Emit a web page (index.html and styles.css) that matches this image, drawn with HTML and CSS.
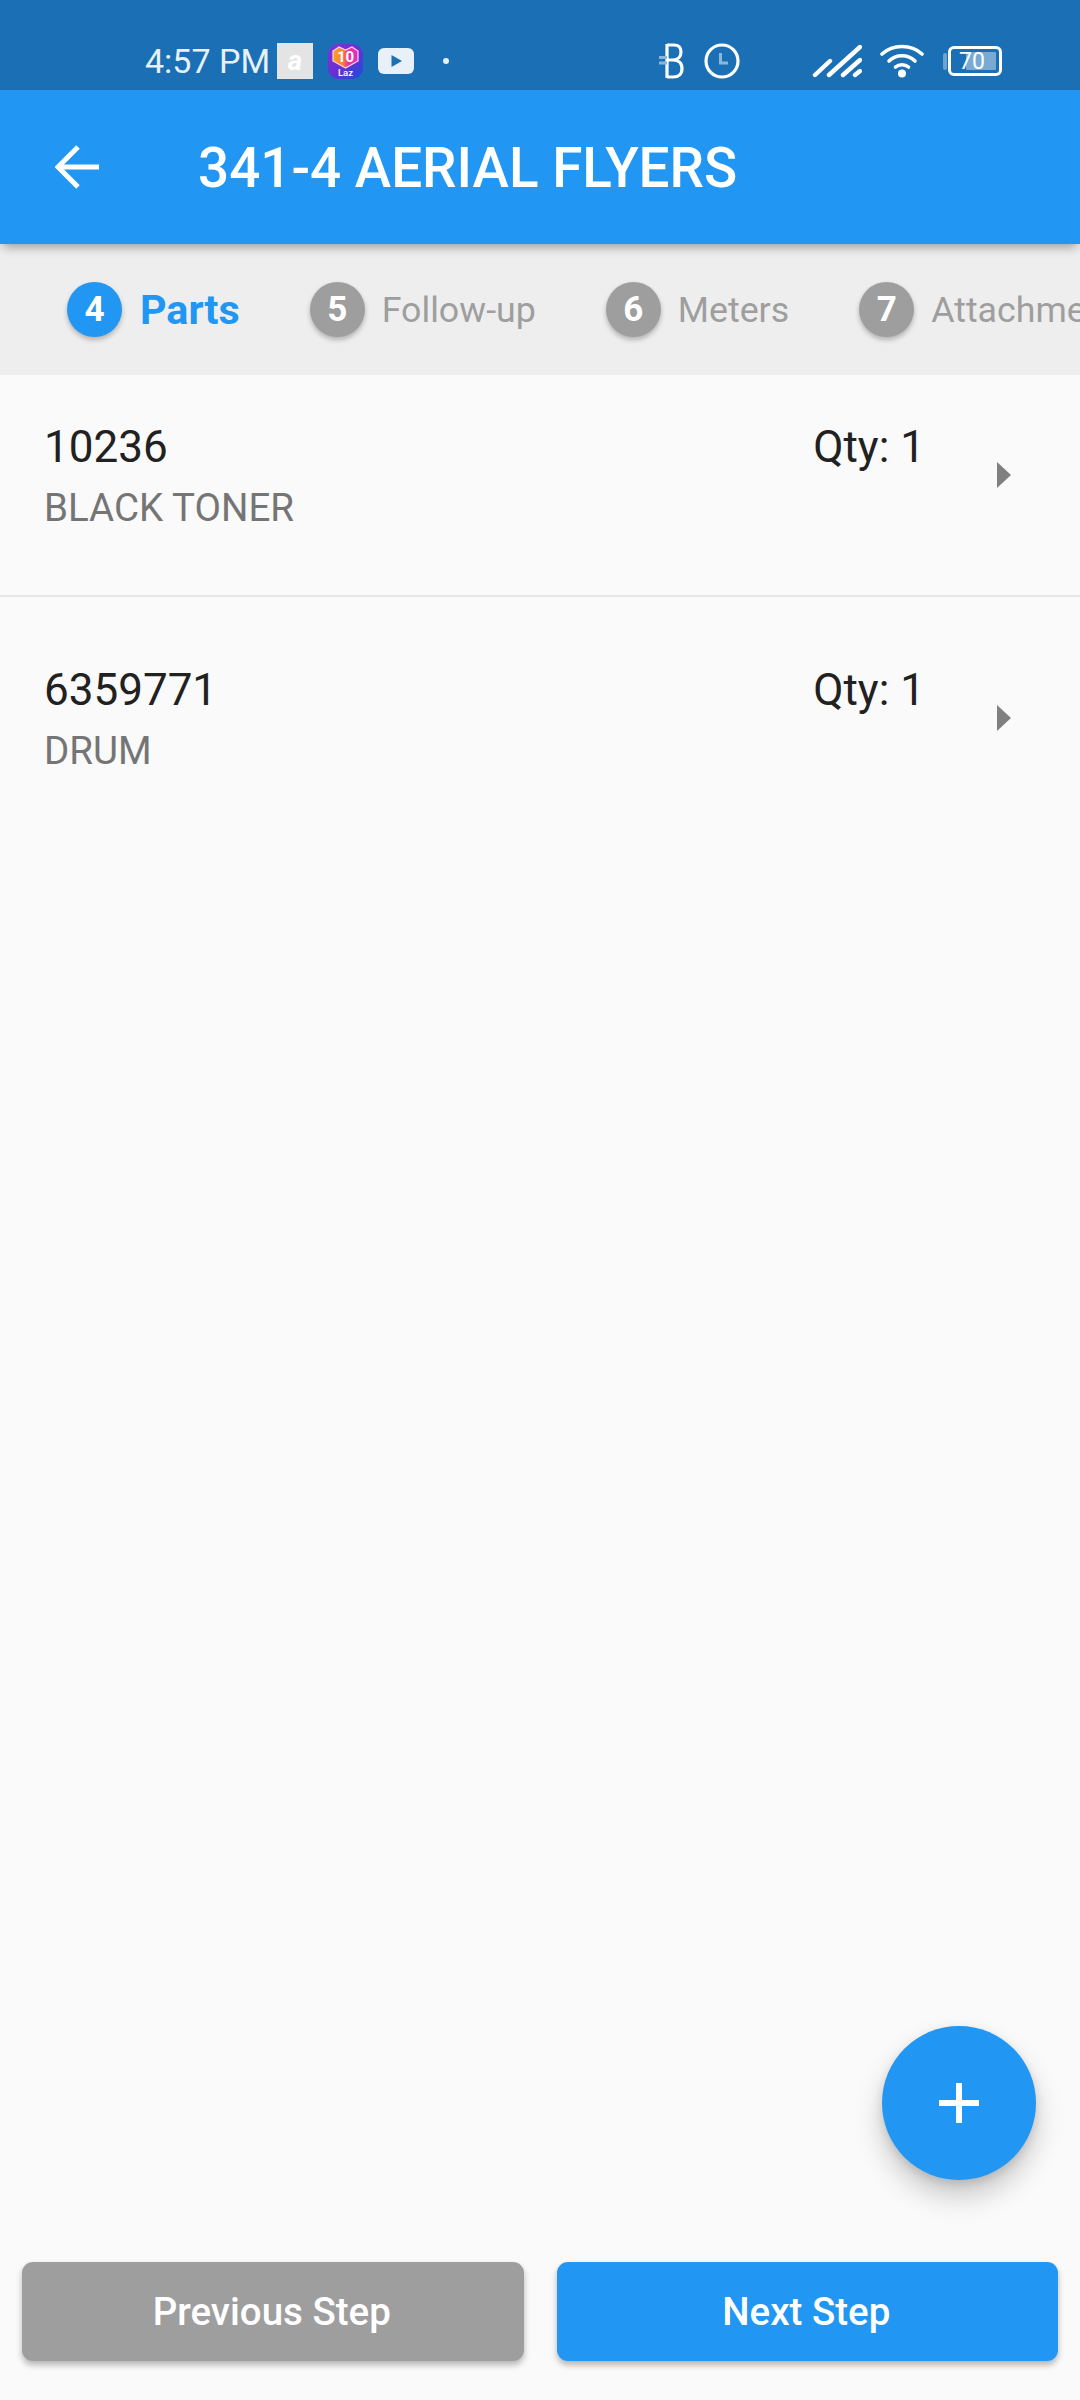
FILE: index.html
```html
<!DOCTYPE html>
<html lang="en">
<head>
    <meta charset="UTF-8">
    <meta name="viewport" content="width=device-width, initial-scale=1.0">
    <title>341-4 AERIAL FLYERS</title>
    <link rel="stylesheet" href="styles.css">
</head>
<body>
    <div class="screen">
        <div class="status-bar">
            <div class="status-left">
                <span class="status-time">4:57 PM</span>
                <div class="notif-square"><span>a</span></div>
                <svg class="notif-laz" viewBox="0 0 35 35">
                    <defs>
                        <linearGradient id="lazBg" x1="0" y1="0" x2="1" y2="1">
                            <stop offset="0" stop-color="#7a35d8"/>
                            <stop offset="0.5" stop-color="#6a2fd4"/>
                            <stop offset="1" stop-color="#1b4edb"/>
                        </linearGradient>
                        <linearGradient id="lazHeart" x1="0" y1="0" x2="1" y2="0">
                            <stop offset="0" stop-color="#f9a11f"/>
                            <stop offset="0.4" stop-color="#f8803a"/>
                            <stop offset="0.6" stop-color="#f0329a"/>
                            <stop offset="1" stop-color="#e02cc0"/>
                        </linearGradient>
                    </defs>
                    <rect width="35" height="35" rx="11" fill="url(#lazBg)"/>
                    <path d="M17.5 24 L5 17 V7 L11 3 L17.5 6 L24 3 L30 7 V17 Z" fill="url(#lazHeart)" stroke="#ffd0ec" stroke-width="1.2"/>
                    <text class="laz-ten" x="17.5" y="18" text-anchor="middle">10</text>
                    <text class="laz-name" x="17.5" y="32" text-anchor="middle">Laz</text>
                </svg>
                <svg class="notif-yt" viewBox="0 0 36 26">
                    <rect width="36" height="26" rx="6" fill="#e8f1f9"/>
                    <path d="M13.5 7 L24 13 L13.5 19 Z" fill="#1a6fb5"/>
                </svg>
                <div class="notif-dot"></div>
            </div>
            <div class="status-right">
                <svg class="ic-bt" viewBox="0 0 25 36" fill="none" stroke="#fff" stroke-width="3.2">
                    <path d="M8 2 H15 C19.5 2 22 4.5 22 9 C22 13.5 19 17 14 17 H8 M14 17 C19.5 17 23 20 23 25.5 C23 31 19.5 34 14.5 34 H8 M8 1 V35"/>
                    <path d="M0 14.5 H8 M0 20 H8" stroke="#8ab7dc"/>
                </svg>
                <svg class="ic-clock" viewBox="0 0 36 36" fill="none">
                    <circle cx="18" cy="18" r="16" stroke="#fff" stroke-width="3.2"/>
                    <path d="M16.5 10 V20 H24" stroke="#8ab7dc" stroke-width="3"/>
                </svg>
                <svg class="ic-signal" viewBox="0 0 50 34" fill="none" stroke="#fff" stroke-width="4.4" stroke-linecap="round">
                    <path d="M3 31 L18 17"/>
                    <path d="M17 31 L48 3"/>
                    <path d="M31 31 L48 16"/>
                    <path d="M43 31 L48 27"/>
                </svg>
                <svg class="ic-wifi" viewBox="0 0 44 34" fill="none" stroke="#fff" stroke-width="3.6" stroke-linecap="round">
                    <path d="M2 10 C13 0 31 0 42 10"/>
                    <path d="M9 17 C16 10 28 10 35 17"/>
                    <path d="M15.5 23 C19 20 25 20 28.5 23"/>
                    <circle cx="22" cy="29.5" r="4" fill="#fff" stroke="none"/>
                </svg>
                <div class="battery">
                    <div class="battery-cap"></div>
                    <div class="battery-body">
                        <div class="battery-fill"></div>
                        <span class="battery-num">70</span>
                    </div>
                </div>
            </div>
        </div>

        <div class="app-bar">
            <svg class="back-icon" viewBox="0 0 44 44" fill="none" stroke="#fff" stroke-width="5">
                <path d="M44 22 H3"/>
                <path d="M23 2 L3 22 L23 42"/>
            </svg>
            <h1>341-4 AERIAL FLYERS</h1>
        </div>

        <div class="stepper">
            <div class="step active">
                <div class="step-num">4</div>
                <span class="step-label">Parts</span>
            </div>
            <div class="step">
                <div class="step-num">5</div>
                <span class="step-label">Follow-up</span>
            </div>
            <div class="step">
                <div class="step-num">6</div>
                <span class="step-label">Meters</span>
            </div>
            <div class="step">
                <div class="step-num">7</div>
                <span class="step-label">Attachments</span>
            </div>
        </div>

        <div class="parts-list">
            <div class="part-row">
                <div class="part-info">
                    <div class="part-code">10236</div>
                    <div class="part-name">BLACK TONER</div>
                </div>
                <div class="part-qty">Qty: 1</div>
                <div class="row-arrow"></div>
            </div>
            <div class="part-row">
                <div class="part-info">
                    <div class="part-code">6359771</div>
                    <div class="part-name">DRUM</div>
                </div>
                <div class="part-qty">Qty: 1</div>
                <div class="row-arrow"></div>
            </div>
        </div>

        <div class="fab">
            <svg viewBox="0 0 40 40" fill="#fff">
                <rect x="17" y="0" width="6" height="40"/>
                <rect x="0" y="17" width="40" height="6"/>
            </svg>
        </div>

        <div class="footer">
            <button class="btn btn-prev">Previous Step</button>
            <button class="btn btn-next">Next Step</button>
        </div>
    </div>
</body>
</html>
```
FILE: styles.css
```css
* {
    margin: 0;
    padding: 0;
    box-sizing: border-box;
    font-family: Roboto, 'Noto Sans', sans-serif;
}

body {
    background-color: #fafafa;
}

.screen {
    position: relative;
    width: 1080px;
    height: 2400px;
    display: flex;
    flex-direction: column;
    overflow: hidden;
    background-color: #fafafa;
}

/* Status bar */
.status-bar {
    height: 90px;
    flex-shrink: 0;
    background-color: #1a6fb5;
    display: flex;
    justify-content: space-between;
    align-items: center;
    padding: 32px 78px 0 145px;
}

.status-left,
.status-right {
    display: flex;
    align-items: center;
}

.status-time {
    color: #e8f1f9;
    font-size: 34px;
    width: 132px;
}

.notif-square {
    width: 36px;
    height: 36px;
    background-color: #e4e4e4;
    display: flex;
    justify-content: center;
    align-items: center;
}

.notif-square span {
    color: #fff;
    font-size: 28px;
    font-weight: bold;
    font-style: italic;
    line-height: 1;
}

.notif-laz {
    width: 35px;
    height: 35px;
    margin-left: 15px;
}

.laz-ten {
    font-size: 15px;
    font-weight: bold;
    fill: #fff;
}

.laz-name {
    font-size: 9.5px;
    font-weight: 500;
    fill: #fff;
}

.notif-yt {
    width: 36px;
    height: 26px;
    margin-left: 15px;
}

.notif-dot {
    width: 6px;
    height: 6px;
    border-radius: 50%;
    background-color: #e8f1f9;
    margin-left: 29px;
}

.ic-bt {
    width: 25px;
    height: 36px;
}

.ic-clock {
    width: 36px;
    height: 36px;
    margin-left: 20px;
}

.ic-signal {
    width: 50px;
    height: 34px;
    margin-left: 72px;
}

.ic-wifi {
    width: 44px;
    height: 34px;
    margin-left: 18px;
}

.battery {
    display: flex;
    align-items: center;
    margin-left: 19px;
}

.battery-cap {
    width: 4px;
    height: 17px;
    border-radius: 2px;
    background-color: #6ca3d0;
    margin-right: 1px;
}

.battery-body {
    position: relative;
    width: 54px;
    height: 30px;
    border: 3px solid #fff;
    border-radius: 6px;
    display: flex;
    justify-content: center;
    align-items: center;
}

.battery-fill {
    position: absolute;
    top: 3px;
    bottom: 3px;
    left: 15px;
    right: 3px;
    background-color: #79aad4;
    border-radius: 1px;
}

.battery-num {
    position: relative;
    color: #fff;
    font-size: 23px;
    line-height: 1;
    margin-right: 6px;
}

/* App bar */
.app-bar {
    position: relative;
    z-index: 2;
    height: 154px;
    flex-shrink: 0;
    background-color: #2196f3;
    display: flex;
    align-items: center;
    padding-left: 55px;
    box-shadow: 0 6px 10px -3px rgba(0, 0, 0, 0.35);
}

.back-icon {
    width: 44px;
    height: 44px;
}

.app-bar h1 {
    color: #fff;
    font-size: 54.8px;
    font-weight: 500;
    margin: 2px 0 0 99px;
}

/* Stepper */
.stepper {
    height: 131px;
    flex-shrink: 0;
    background-color: #eeeeee;
    display: flex;
    align-items: center;
    padding-left: 67px;
    gap: 70px;
    white-space: nowrap;
}

.step {
    display: flex;
    align-items: center;
    gap: 17px;
}

.step.active {
    gap: 18px;
}

.step-num {
    width: 55px;
    height: 55px;
    border-radius: 50%;
    background-color: #9e9e9e;
    color: #fff;
    font-size: 35px;
    font-weight: bold;
    display: flex;
    justify-content: center;
    align-items: center;
    box-shadow: 0 3px 5px rgba(0, 0, 0, 0.25);
}

.step-label {
    color: #9e9e9e;
    font-size: 35.75px;
}

.step.active .step-num {
    background-color: #2196f3;
}

.step.active .step-label {
    color: #2196f3;
    font-size: 41.25px;
    font-weight: bold;
}

/* Parts list */
.parts-list {
    flex: 1;
}

.part-row {
    height: 222px;
    display: flex;
    align-items: flex-start;
    padding: 44px 69px 0 44px;
}

.part-row:first-child {
    border-bottom: 2px solid #e6e6e6;
}

.part-row + .part-row {
    padding-top: 65px;
}

.part-info {
    flex: 1;
}

.part-code {
    color: #212121;
    font-size: 44px;
    line-height: 56px;
}

.part-name {
    color: #757575;
    font-size: 38.5px;
    line-height: 48px;
    margin-top: 9px;
}

.part-qty {
    color: #212121;
    font-size: 44px;
    line-height: 56px;
}

.row-arrow {
    width: 0;
    height: 0;
    margin-top: 43px;
    margin-left: 72px;
    border-left: 14px solid #808080;
    border-top: 13px solid transparent;
    border-bottom: 13px solid transparent;
}

/* Floating add button */
.fab {
    position: absolute;
    left: 882px;
    top: 2026px;
    width: 154px;
    height: 154px;
    border-radius: 50%;
    background-color: #2196f3;
    display: flex;
    justify-content: center;
    align-items: center;
    box-shadow: 0 16px 28px rgba(0, 0, 0, 0.2), 0 4px 10px rgba(0, 0, 0, 0.12);
}

.fab svg {
    width: 40px;
    height: 40px;
}

/* Footer buttons */
.footer {
    display: flex;
    gap: 33px;
    padding: 0 22px 39px;
    flex-shrink: 0;
}

.btn {
    flex: 1;
    height: 99px;
    border: none;
    border-radius: 11px;
    padding-right: 2px;
    color: #fff;
    font-size: 38.5px;
    font-weight: 500;
    box-shadow: 0 4px 6px rgba(0, 0, 0, 0.28);
}

.btn-prev {
    background-color: #9e9e9e;
}

.btn-next {
    background-color: #2196f3;
}
```
